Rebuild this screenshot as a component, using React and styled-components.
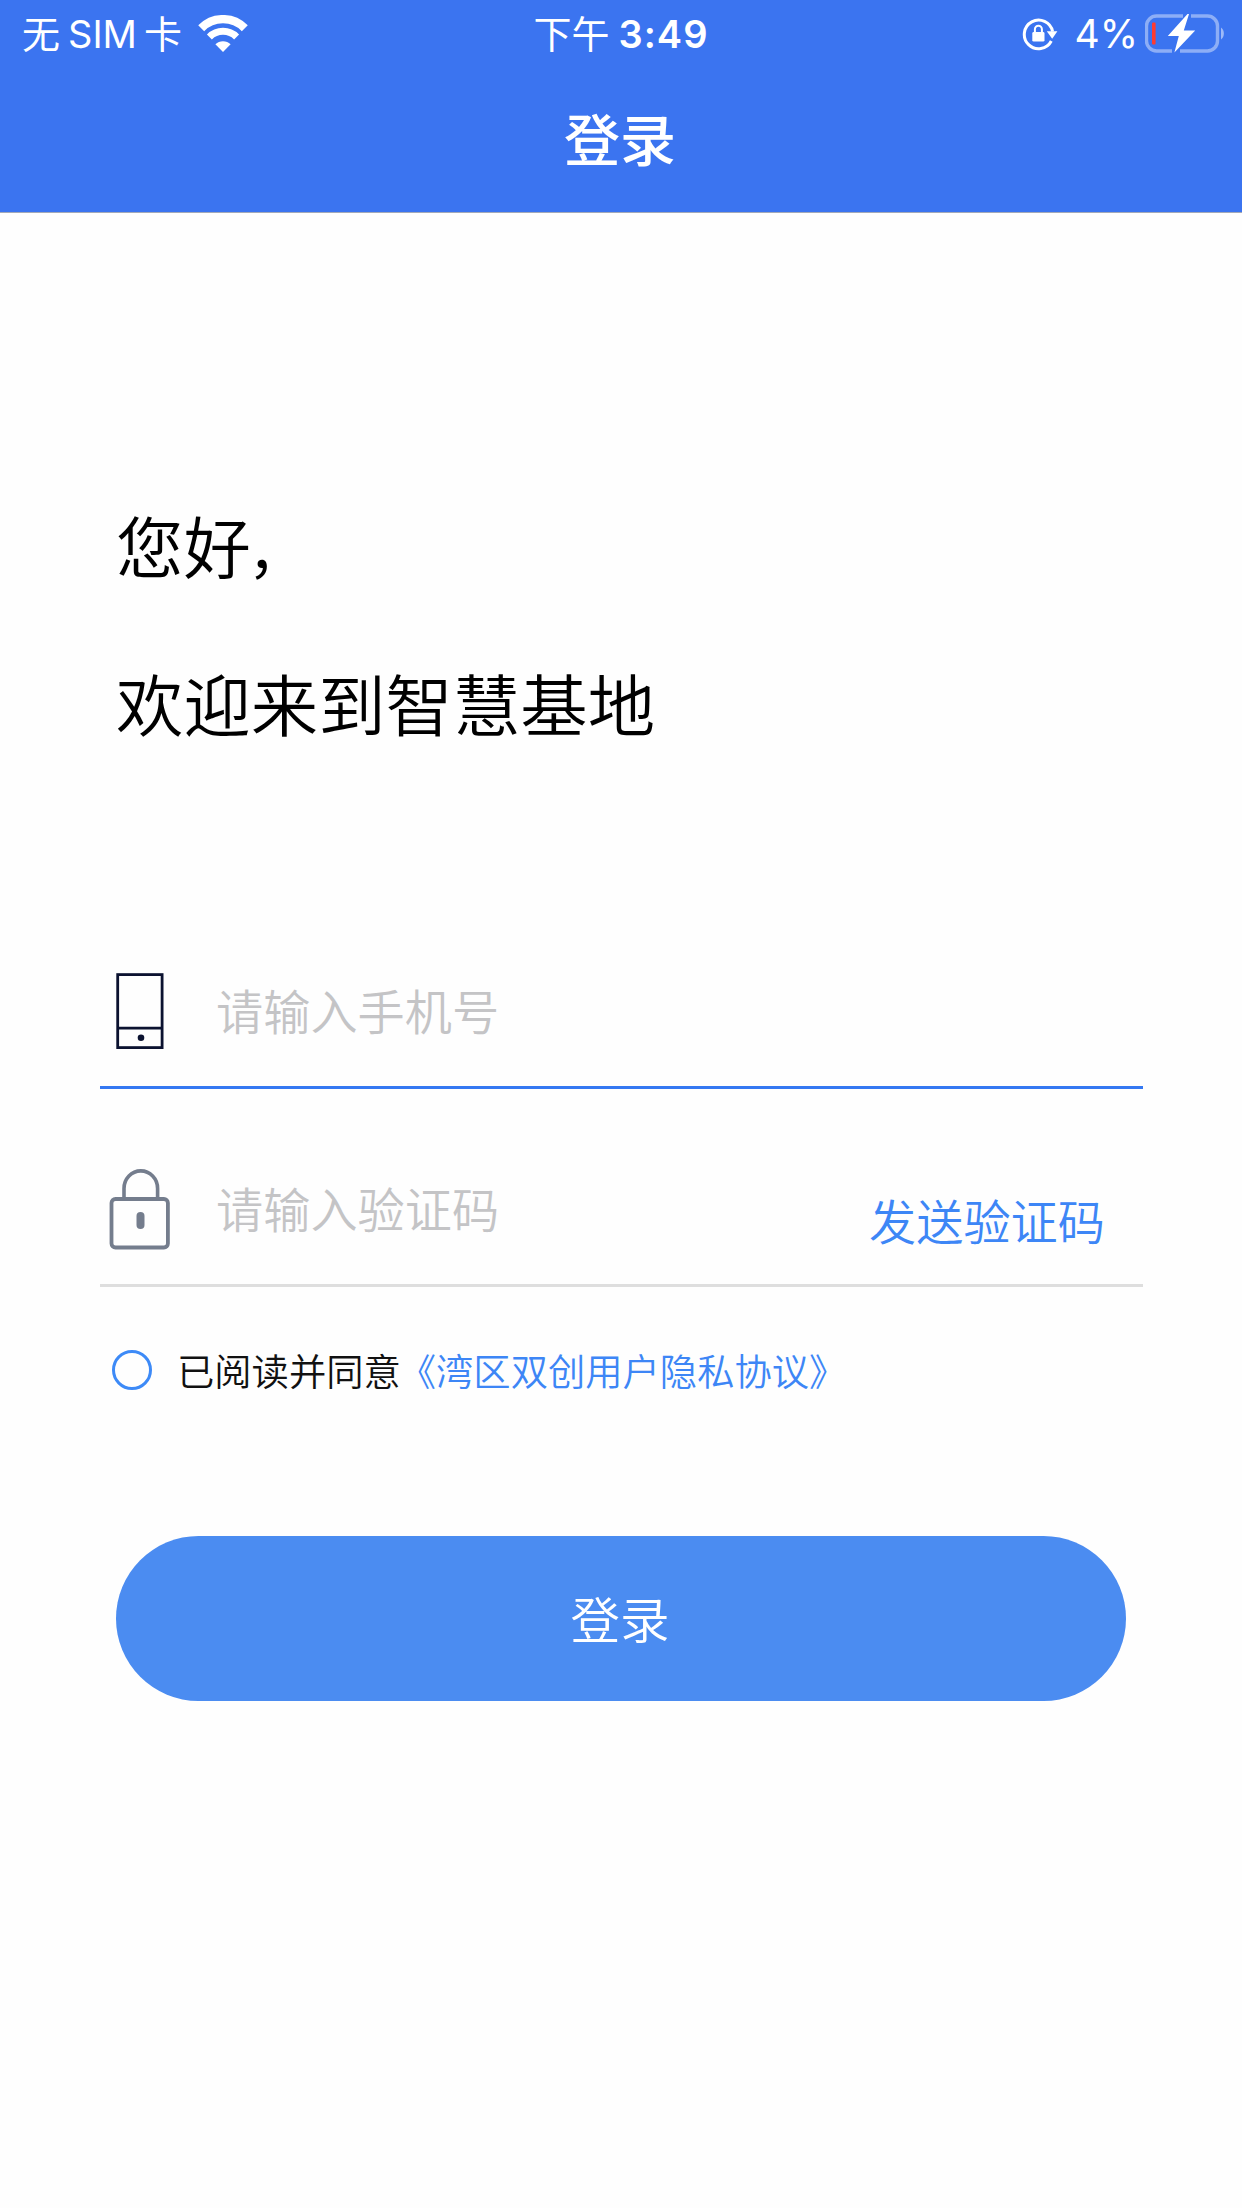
import React, { useState } from 'react'
import styled, { createGlobalStyle } from 'styled-components'

function StatusBar() {
  return (
    <StatusStyled>
      <div className="left">
        <span className="cjk">无</span>
        <span className="latin">SIM</span>
        <span className="cjk">卡</span>
        <svg className="wifi" width="50" height="38" viewBox="0 0 50 38" fill="none">
          <path d="M3.2 13.2a30.8 30.8 0 0 1 43.6 0" stroke="#fff" strokeWidth="8.4" />
          <path d="M11.4 22a19.2 19.2 0 0 1 27.2 0" stroke="#fff" strokeWidth="7" />
          <path d="M25 37l-7.6-7.7a10.8 10.8 0 0 1 15.2 0z" fill="#fff" />
        </svg>
      </div>
      <div className="time">
        <span className="cjk">下午</span>
        <span className="latin">3:49</span>
      </div>
      <div className="right">
        <svg width="36" height="34" viewBox="0 0 36 34" fill="none">
          <path d="M29.3 24A14.3 14.3 0 1 1 30.6 14.5" stroke="#fff" strokeWidth="3" />
          <path d="M24.8 14.2h10.6l-5.2 7.6z" fill="#fff" />
          <rect x="10.3" y="15" width="12.2" height="9.6" rx="1.4" fill="#fff" />
          <path d="M12.9 15.5v-3.2a3.5 3.5 0 0 1 7 0v3.2" stroke="#fff" strokeWidth="2" />
        </svg>
        <span className="latin percent">4%</span>
        <svg className="battery" width="80" height="40" viewBox="0 0 80 40" fill="none">
          <path
            d="M38 2H11.5a10 10 0 0 0-10 10v15a10 10 0 0 0 10 10H27M46 2h16.5a10 10 0 0 1 10 10v15a10 10 0 0 1-10 10H35"
            stroke="#fff"
            strokeOpacity="0.42"
            strokeWidth="3.4"
          />
          <path d="M76 13.5c3.8 2.6 3.8 9.4 0 12z" fill="#fff" fillOpacity="0.5" />
          <rect x="7" y="8.6" width="3.6" height="22" rx="1" fill="#ff3b30" />
          <path d="M42.5 0L22.8 22h11L29.4 38.5 50.2 16.4H38.8L44 0z" fill="#fff" />
        </svg>
      </div>
    </StatusStyled>
  )
}

function App() {
  const [agreed, setAgreed] = useState(false)

  return (
    <AppStyled>
      <GlobalStyle />
      <Header>
        <StatusBar />
        <h1>登录</h1>
      </Header>
      <Greeting>
        <p>您好<span>，</span></p>
        <p>欢迎来到智慧基地</p>
      </Greeting>
      <Form>
        <Field $active>
          <svg width="72" height="90" viewBox="0 0 72 90" fill="none">
            <rect x="18.7" y="9.6" width="44.4" height="73" stroke="#0b1230" strokeWidth="2.8" />
            <path d="M18.7 63.2h44.4" stroke="#0b1230" strokeWidth="2.8" />
            <circle cx="42" cy="72.8" r="3.3" fill="#0b1230" />
          </svg>
          <Placeholder $lift={2}>请输入手机号</Placeholder>
        </Field>
        <Field>
          <svg width="72" height="94" viewBox="0 0 72 94" fill="none">
            <rect x="12.5" y="39" width="56.4" height="48.5" rx="4" stroke="#747d8d" strokeWidth="3.8" />
            <path d="M25 38V28.5a16.8 17.6 0 0 1 33.6 0V38" stroke="#747d8d" strokeWidth="3.6" />
            <rect x="37.5" y="52" width="8" height="17" rx="4" fill="#747d8d" />
          </svg>
          <Placeholder $lift={-2}>请输入验证码</Placeholder>
          <SendCode>发送验证码</SendCode>
        </Field>
        <Agreement>
          <Radio $checked={agreed} onClick={() => setAgreed(!agreed)} />
          <p>
            已阅读并同意<a>《湾区双创用户隐私协议》</a>
          </p>
        </Agreement>
        <LoginButton>登录</LoginButton>
      </Form>
    </AppStyled>
  )
}

const GlobalStyle = createGlobalStyle`
  * {
    box-sizing: border-box;
    margin: 0;
    padding: 0;
  }
  body {
    background: #fefefe;
    font-family: "Noto Sans CJK SC", sans-serif;
  }
`

const AppStyled = styled.div`
  width: 1242px;
  height: 2208px;
  overflow: hidden;
  background: #fefefe;
`

const Header = styled.header`
  height: 213px;
  background: #3b74f0;
  border-bottom: 1px solid #a3a9b8;
  color: #fff;

  h1 {
    height: 138px;
    padding-right: 2px;
    line-height: 138px;
    text-align: center;
    font-size: 56px;
    font-weight: 500;
  }
`

const StatusStyled = styled.div`
  display: grid;
  grid-template-columns: 1fr auto 1fr;
  align-items: center;
  height: 68px;
  font-size: 38px;
  line-height: 68px;

  .latin {
    font-family: Inter, sans-serif;
  }

  .cjk {
    padding-bottom: 5px;
    line-height: 63px;
  }

  .left,
  .time,
  .right {
    display: flex;
    align-items: center;
  }

  .left {
    padding-left: 22px;

    .latin {
      margin: 0 7px 0 8px;
    }
    .wifi {
      margin-left: 16px;
    }
  }

  .time {
    .cjk {
      font-weight: 400;
    }
    .latin {
      margin-left: 9px;
      font-weight: 600;
      letter-spacing: 1px;
    }
  }

  .right {
    justify-content: flex-end;
    padding-right: 17px;

    .percent {
      margin-left: 17px;
      font-size: 39px;
    }
    .battery {
      margin-left: 7px;
    }
  }
`

const Greeting = styled.section`
  padding: 252px 116px 0;

  p {
    height: 158px;
    line-height: 158px;
    color: #000;
    font-size: 67.4px;
    font-weight: 350;
  }
  span {
    margin-left: -3px;
    font-size: 58px;
    font-weight: 400;
  }
`

const Form = styled.form`
  padding: 143px 99px 0 100px;
`

const Field = styled.div`
  display: flex;
  align-items: center;
  height: ${({ $active }) => ($active ? '165px' : '198px')};
  padding-top: ${({ $active }) => ($active ? '10px' : '40px')};
  border-bottom: 3px solid ${({ $active }) => ($active ? '#3478f2' : '#dedede')};

  svg {
    margin-left: -1px;
  }
`

const Placeholder = styled.span`
  flex: 1;
  margin-left: 45px;
  padding-bottom: ${({ $lift }) => Math.max($lift, 0)}px;
  padding-top: ${({ $lift }) => Math.max(-$lift, 0)}px;
  color: #c4c4c6;
  font-size: 47.2px;
  font-weight: 350;
`

const SendCode = styled.a`
  margin: 25px 38px 0 0;
  color: #3d86f6;
  font-size: 47.2px;
  font-weight: 350;
`

const Agreement = styled.div`
  display: flex;
  align-items: center;
  height: 165px;
  padding-left: 12px;

  p {
    margin-left: 25px;
    color: #111;
    font-size: 37.3px;
    font-weight: 350;
  }
  a {
    margin-left: -2px;
    color: #3d86f6;
  }
`

const Radio = styled.span`
  width: 40px;
  height: 40px;
  border: 3px solid #3d8af7;
  border-radius: 50%;
  background: ${({ $checked }) => ($checked ? '#3d8af7' : 'transparent')};
`

const LoginButton = styled.button`
  display: block;
  width: 1010px;
  height: 165px;
  margin: 84px 0 0 16px;
  padding: 0 2px 2px 0;
  border: 0;
  border-radius: 83px;
  background: #4b8cf1;
  color: #fff;
  font-family: inherit;
  font-size: 49.5px;
  font-weight: 350;
`

export default App
